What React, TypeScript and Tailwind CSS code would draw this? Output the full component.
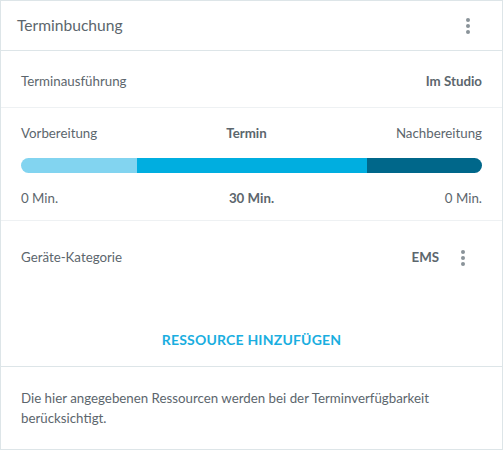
import React from "react";

function Dots() {
  return (
    <div className="flex flex-col items-center gap-[2px]">
      <span className="block w-[4px] h-[4px] rounded-full bg-[#8a9399]" />
      <span className="block w-[4px] h-[4px] rounded-full bg-[#8a9399]" />
      <span className="block w-[4px] h-[4px] rounded-full bg-[#8a9399]" />
    </div>
  );
}

export default function App() {
  return (
    <div
      className="w-[503px] h-[450px] bg-white border border-[#dde5e8] flex flex-col text-[#5c666d]"
      style={{ fontFamily: "Lato, 'Liberation Sans', sans-serif" }}
    >
      <div className="h-[50px] shrink-0 flex items-center justify-between pl-[16px] pr-[32px] border-b border-[#dde5e8]">
        <span className="text-[15.6px]">Terminbuchung</span>
        <Dots />
      </div>
      <div className="h-[57px] shrink-0 flex items-center justify-between px-[20px] pt-[6px] border-b border-[#eef1f3] text-[13.3px]">
        <span>Terminausführung</span>
        <span className="font-bold">Im Studio</span>
      </div>
      <div className="h-[113px] shrink-0 px-[20px] pt-[16px] border-b border-[#eef1f3] text-[13.3px]">
        <div className="flex justify-between h-[20px] items-center">
          <span>Vorbereitung</span>
          <span className="font-bold">Termin</span>
          <span>Nachbereitung</span>
        </div>
        <div className="mt-[14px] h-[15px] flex rounded-full overflow-hidden">
          <div className="w-[116px] bg-[#82d4f0]" />
          <div className="w-[230px] bg-[#00aee0]" />
          <div className="flex-1 bg-[#00678a]" />
        </div>
        <div className="mt-[16px] flex justify-between h-[20px] items-center">
          <span>0 Min.</span>
          <span className="font-bold">30 Min.</span>
          <span>0 Min.</span>
        </div>
      </div>
      <div className="h-[146px] shrink-0 flex flex-col border-b border-[#dde5e8]">
        <div className="h-[72px] flex items-center justify-between pl-[20px] pr-[37px] pt-[2px] text-[13.3px]">
          <span>Geräte-Kategorie</span>
          <div className="flex items-center gap-[22px]">
            <span className="font-bold">EMS</span>
            <Dots />
          </div>
        </div>
        <div className="flex-1 flex items-center justify-center pt-[20px]">
          <span className="text-[#1aaee0] font-bold text-[14px] tracking-[0.2px]">RESSOURCE HINZUFÜGEN</span>
        </div>
      </div>
      <div className="px-[20px] pt-[21px] text-[13.3px] leading-[20px]">
        Die hier angegebenen Ressourcen werden bei der Terminverfügbarkeit berücksichtigt.
      </div>
    </div>
  );
}
